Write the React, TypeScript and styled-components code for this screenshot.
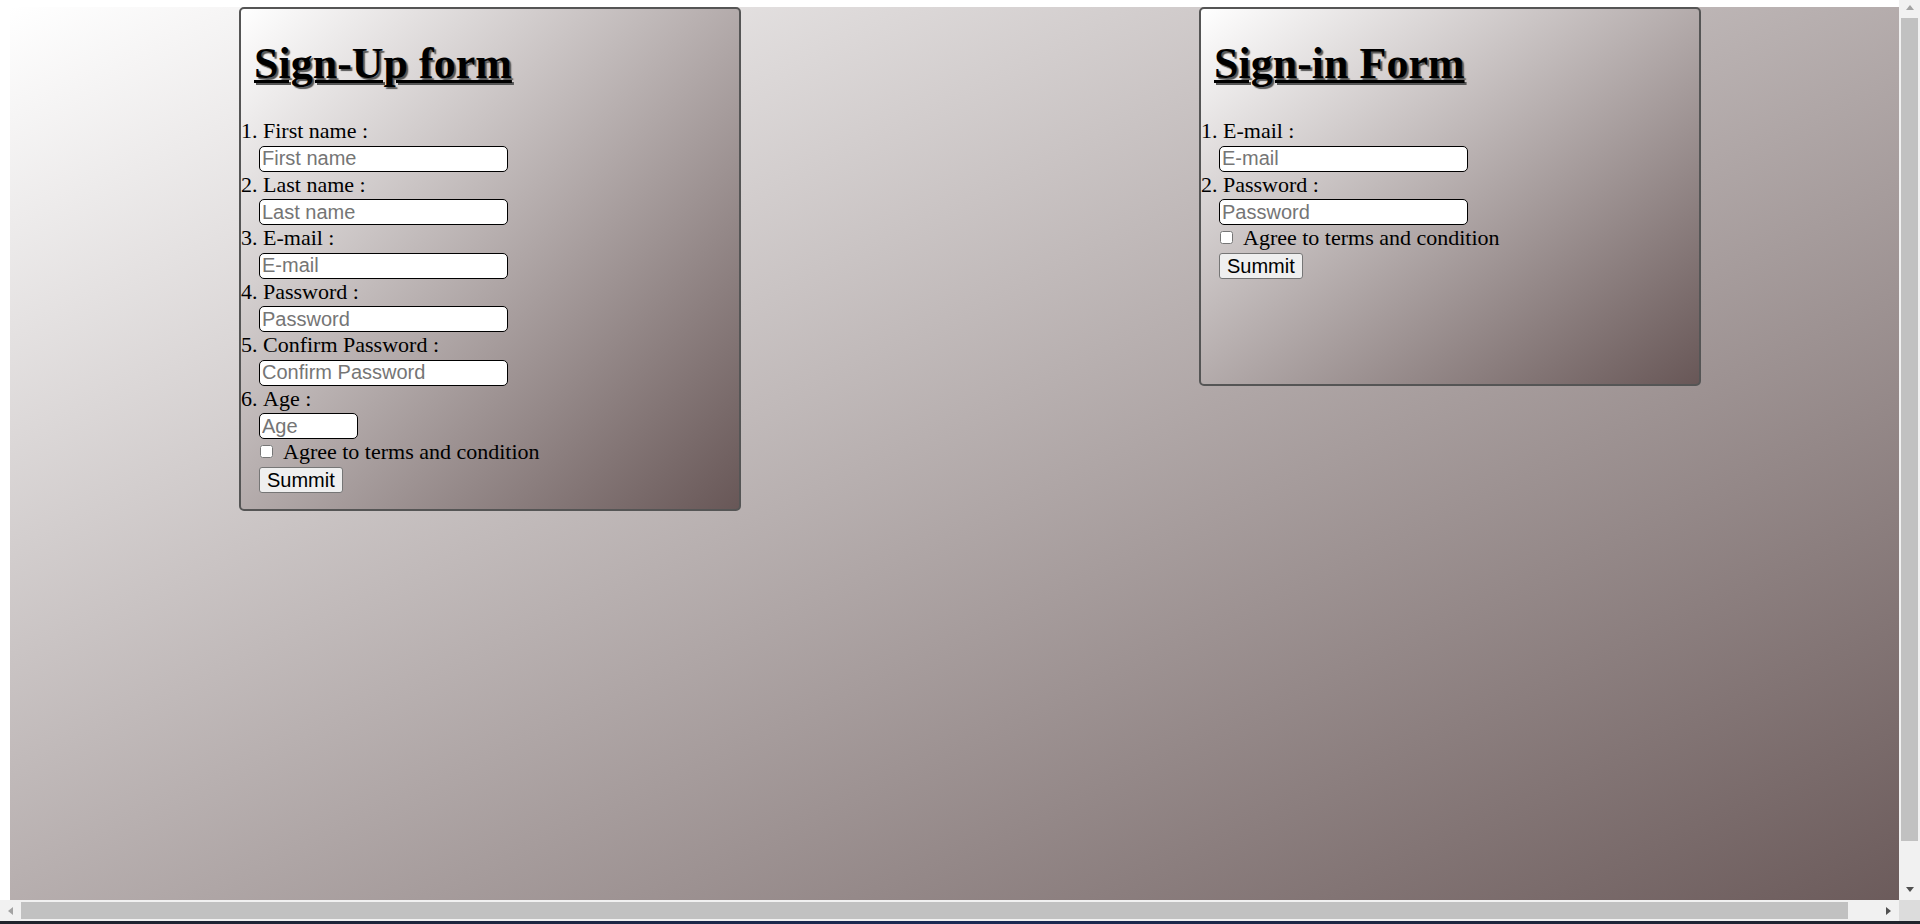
import styled, { createGlobalStyle, css } from 'styled-components'

type Field = { label: string; placeholder: string; type?: string; width?: number }
type Direction = 'up' | 'down' | 'left' | 'right'

const signUpFields: Field[] = [
  { label: 'First name :', placeholder: 'First name' },
  { label: 'Last name :', placeholder: 'Last name' },
  { label: 'E-mail :', placeholder: 'E-mail', type: 'email' },
  { label: 'Password :', placeholder: 'Password', type: 'password' },
  { label: 'Confirm Password :', placeholder: 'Confirm Password', type: 'password' },
  { label: 'Age :', placeholder: 'Age', type: 'number', width: 99 },
]

const signInFields: Field[] = [
  { label: 'E-mail :', placeholder: 'E-mail', type: 'email' },
  { label: 'Password :', placeholder: 'Password', type: 'password' },
]

const GRADIENT = 'linear-gradient(to bottom right, #ffffff, #685757)'

const GlobalStyle = createGlobalStyle`
  * {
    box-sizing: border-box;
  }

  html,
  body {
    margin: 0;
    padding: 0;
    overflow: hidden;
    background: #fff;
  }

  body {
    font-family: "Liberation Serif", "Times New Roman", serif;
    color: #000;
  }
`

const FormCard = ({
  title,
  fields,
  height,
}: {
  title: string
  fields: Field[]
  height?: number
}) => {
  return (
    <Card $height={height}>
      <Title>{title}</Title>

      <FieldList>
        {fields.map((field) => (
          <li key={field.placeholder}>
            <span>{field.label}</span>
            <TextInput
              type={field.type ?? 'text'}
              placeholder={field.placeholder}
              $width={field.width ?? 249}
            />
          </li>
        ))}
      </FieldList>

      <Extras>
        <CheckRow>
          <Checkbox type="checkbox" />
          <span>Agree to terms and condition</span>
        </CheckRow>
        <SubmitButton type="button">Summit</SubmitButton>
      </Extras>
    </Card>
  )
}

export default function App() {
  return (
    <Screen>
      <GlobalStyle />
      <Window>
        <Viewport>
          <Page>
            <FormCard title="Sign-Up form" fields={signUpFields} />
            <FormCard title="Sign-in Form" fields={signInFields} height={379} />
          </Page>
        </Viewport>

        <VScrollbar>
          <ArrowButton $dir="up" $size={18} />
          <Track>
            <Thumb $length={823} />
          </Track>
          <ArrowButton $dir="down" $active />
        </VScrollbar>

        <HScrollbar>
          <ArrowButton $dir="left" />
          <Track>
            <Thumb $length={1827} $horizontal />
          </Track>
          <ArrowButton $dir="right" $active />
        </HScrollbar>

        <Corner />
      </Window>
      <Taskbar />
    </Screen>
  )
}

const Screen = styled.div`
  width: 1920px;
  height: 924px;

  display: flex;
  flex-direction: column;
`

const Window = styled.div`
  display: grid;
  grid-template-columns: 1899px 21px;
  grid-template-rows: 900px 21px;
`

const Viewport = styled.div`
  overflow: hidden;
  background: #fff;
`

const Page = styled.main`
  width: 1920px;
  height: 924px;
  margin: 7px 0 0 10px;

  display: flex;
  justify-content: space-around;
  align-items: flex-start;

  background: ${GRADIENT};
`

const VScrollbar = styled.div`
  display: flex;
  flex-direction: column;
  background: #f1f1f1;
`

const HScrollbar = styled.div`
  display: flex;
  background: #f1f1f1;
`

const Track = styled.div`
  flex: 1;
  display: flex;
`

const Thumb = styled.div<{ $length: number; $horizontal?: boolean }>`
  background: #c1c1c1;
  ${(props) =>
    props.$horizontal
      ? css`
          width: ${props.$length}px;
          margin: 2px 0;
        `
      : css`
          width: 100%;
          height: ${props.$length}px;
          margin: 0 2px;
        `}
`

const arrowShape = (dir: Direction, color: string) => {
  switch (dir) {
    case 'up':
      return css`
        border-left: 4.5px solid transparent;
        border-right: 4.5px solid transparent;
        border-bottom: 5px solid ${color};
      `
    case 'down':
      return css`
        border-left: 4.5px solid transparent;
        border-right: 4.5px solid transparent;
        border-top: 5px solid ${color};
      `
    case 'left':
      return css`
        border-top: 4.5px solid transparent;
        border-bottom: 4.5px solid transparent;
        border-right: 5px solid ${color};
      `
    default:
      return css`
        border-top: 4.5px solid transparent;
        border-bottom: 4.5px solid transparent;
        border-left: 5px solid ${color};
      `
  }
}

const ArrowButton = styled.div<{ $dir: Direction; $active?: boolean; $size?: number }>`
  flex: 0 0 ${(props) => props.$size ?? 21}px;

  display: flex;
  align-items: ${(props) => (props.$dir === 'up' ? 'flex-end' : 'center')};
  justify-content: center;
  padding-bottom: ${(props) => (props.$dir === 'up' ? '8px' : '0')};

  &::before {
    content: '';
    width: 0;
    height: 0;
    ${(props) => arrowShape(props.$dir, props.$active ? '#505050' : '#a3a3a3')}
  }
`

const Corner = styled.div`
  background: #dcdcdc;
`

const Card = styled.section<{ $height?: number }>`
  width: 502px;
  height: ${(props) => (props.$height ? `${props.$height}px` : 'auto')};

  border: 2px solid #555;
  border-radius: 5px;
  background: ${GRADIENT};

  padding-bottom: 16px;
`

const Title = styled.h1`
  margin: 29.5px 0;
  padding-left: 13px;

  font-size: 44px;
  line-height: 50px;
  font-weight: bold;
  text-decoration: underline;
  text-decoration-thickness: 3px;
  text-underline-offset: 2px;
  text-shadow: 2px 2px 1px #555;
`

const FieldList = styled.ol`
  margin: 0;
  padding: 0;

  list-style: decimal inside;
  font-size: 22px;
  line-height: 25.5px;
`

const TextInput = styled.input<{ $width: number }>`
  display: block;
  width: ${(props) => props.$width}px;
  height: 26px;
  margin: 2px 0 0 18px;
  padding: 0 2px;

  border: 1px solid #000;
  border-radius: 5px;
  background: #fff;
  outline: none;

  font-family: "Liberation Sans", Arial, sans-serif;
  font-size: 20px;
  color: #000;

  -moz-appearance: textfield;

  &::placeholder {
    color: #757575;
  }

  &::-webkit-inner-spin-button,
  &::-webkit-outer-spin-button {
    -webkit-appearance: none;
    margin: 0;
  }
`

const Extras = styled.div`
  padding-left: 18px;
`

const CheckRow = styled.label`
  height: 28px;

  display: flex;
  align-items: flex-start;
  gap: 10px;

  font-size: 22px;
  line-height: 25.5px;
`

const Checkbox = styled.input`
  width: 13px;
  height: 13px;
  margin: 6px 0 0 1px;
`

const SubmitButton = styled.button`
  display: block;
  height: 26px;
  margin: 0;
  padding: 0 7px;

  border: 1px solid #767676;
  border-radius: 3px;
  background: #efefef;
  color: #000;

  font-family: "Liberation Sans", Arial, sans-serif;
  font-size: 20px;
  line-height: 24px;
`

const Taskbar = styled.div`
  height: 3px;
  background: linear-gradient(to right, #20232b, #1b2a55 50%, #20232b);
`
